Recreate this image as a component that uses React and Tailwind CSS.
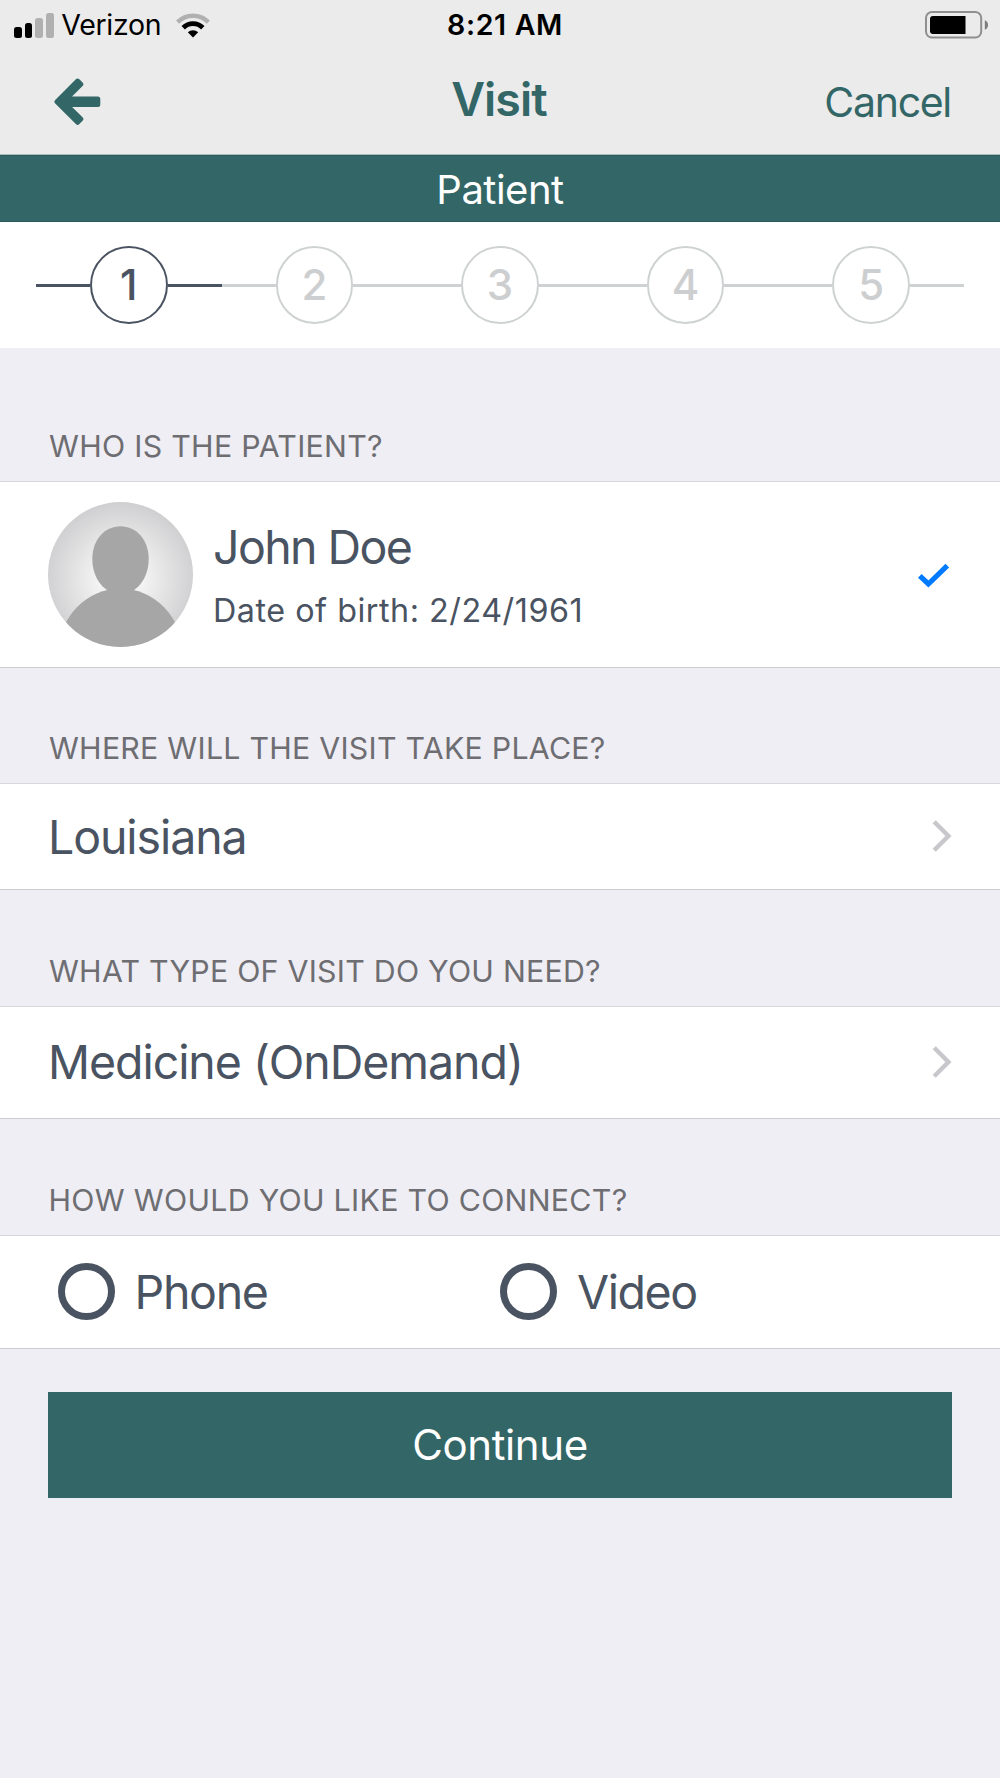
const steps = [1, 2, 3, 4, 5];

function SignalBars() {
  return (
    <div className="flex h-[25px] items-end gap-[3px]">
      <span className="h-[10.5px] w-[7.7px] rounded-[2.5px] bg-black" />
      <span className="h-[14.5px] w-[7.7px] rounded-[2.5px] bg-black" />
      <span className="h-[19.5px] w-[7.7px] rounded-[2.5px] bg-[#b0b0b0]" />
      <span className="h-[24.3px] w-[7.7px] rounded-[2.5px] bg-[#b0b0b0]" />
    </div>
  );
}

function WifiIcon({ className }) {
  return (
    <svg className={className} width="34" height="25" viewBox="0 0 34 25" fill="none">
      <path d="M1.6 9.1 A21.8 21.8 0 0 1 32.4 9.1" stroke="#b0b0b0" strokeWidth="4.4" />
      <path d="M7.2 14.7 A13.9 13.9 0 0 1 26.8 14.7" stroke="#000" strokeWidth="4.8" />
      <path d="M17 24.4 L11.8 19.2 A7.6 7.6 0 0 1 22.2 19.2 Z" fill="#000" />
    </svg>
  );
}

function BatteryIcon() {
  return (
    <svg width="64" height="28" viewBox="0 0 64 28" fill="none">
      <rect x="1" y="1" width="55.2" height="25.6" rx="6" stroke="#8f8f8f" strokeWidth="2" />
      <path d="M8 5 H40.5 V23 H8 A3 3 0 0 1 5 20 V8 A3 3 0 0 1 8 5 Z" fill="#000" />
      <path d="M59.8 9.2 Q63 10.5 63 14 Q63 17.5 59.8 18.8 Z" fill="#7d7d7d" />
    </svg>
  );
}

function BackArrow() {
  return (
    <svg width="48" height="48" viewBox="0 0 48 48">
      <path
        d="M4 23.7 L24.6 3.1 L27.8 6.3 L13 20.9 H44.8 V26.5 H13 L27.8 41.1 L24.6 44.3 Z"
        fill="#336666"
        stroke="#336666"
        strokeWidth="5"
        strokeLinejoin="round"
      />
    </svg>
  );
}

function Avatar() {
  return (
    <svg className="shrink-0" width="145" height="145" viewBox="0 0 145 145">
      <defs>
        <radialGradient id="halo" cx="72.5" cy="76" r="76" gradientUnits="userSpaceOnUse">
          <stop offset="0.3" stopColor="#f3f3f3" />
          <stop offset="1" stopColor="#cfcfd1" />
        </radialGradient>
        <clipPath id="disc">
          <circle cx="72.5" cy="72.5" r="72.5" />
        </clipPath>
      </defs>
      <g clipPath="url(#disc)">
        <rect width="145" height="145" fill="url(#halo)" />
        <path
          d="M72.5 24.3 C88.5 24.3 100.7 38 100.7 57 C100.7 71.5 94.5 83.5 83 90 H62 C50.5 83.5 44.3 71.5 44.3 57 C44.3 38 56.5 24.3 72.5 24.3 Z"
          fill="#a6a6a6"
        />
        <ellipse cx="72.5" cy="151" rx="62" ry="64.5" fill="#a6a6a6" />
      </g>
    </svg>
  );
}

function CheckIcon() {
  return (
    <svg className="translate-y-px" width="32" height="26" viewBox="0 0 32 26" fill="none">
      <path d="M1.8 12.8 L10.4 21 L29.3 2.6" stroke="#007aff" strokeWidth="5.2" />
    </svg>
  );
}

function Chevron() {
  return (
    <svg className="-translate-y-px" width="20" height="32" viewBox="0 0 20 32" fill="none">
      <path d="M2.2 1.8 L16.4 16 L2.2 30.2" stroke="#c7c7cc" strokeWidth="4.4" />
    </svg>
  );
}

function SectionLabel({ className, children }) {
  return (
    <h2 className={`flex items-end text-[30.3px] leading-[30px] whitespace-nowrap text-[#6d6d72] ${className}`}>
      {children}
    </h2>
  );
}

function Row({ className, children }) {
  return (
    <div className={`flex items-center border-y border-t-[#d8d8dc] border-b-[#cdcdd1] bg-white ${className}`}>
      {children}
    </div>
  );
}

function Radio({ label, className }) {
  return (
    <label className="flex flex-1 items-center">
      <span className="-mt-0.5 size-[57px] rounded-full border-[7px] border-[#4a5361]" />
      <span className={`text-[46.5px] leading-none ${className}`}>{label}</span>
    </label>
  );
}

function Stepper({ current }) {
  return (
    <div className="flex h-[126px] items-center bg-white px-9">
      {steps.map((n) => {
        const active = n === current;
        const line = active ? "bg-[#4a5361]" : "bg-[#cfd2d2]";
        const ring = active ? "border-[#4a5361] text-[#4a5361]" : "border-[#cfd2d2] text-[#cccecf]";
        return (
          <div key={n} className="flex flex-1 items-center">
            <span className={`mt-px h-[3px] flex-1 ${line}`} />
            <span
              className={`flex size-[77.5px] items-center justify-center rounded-full border-[2.4px] text-[42px] leading-none font-medium ${ring}`}
            >
              {n}
            </span>
            <span className={`mt-px h-[3px] flex-1 ${line}`} />
          </div>
        );
      })}
    </div>
  );
}

export default function App() {
  return (
    <div className="flex h-[1778px] w-[1000px] flex-col overflow-hidden bg-[#efeef4] font-['Inter','Liberation_Sans',sans-serif] text-[#4a5361]">
      <header className="h-[155px] border-b border-[#a9bcbc] bg-[#ebebeb]">
        <div className="grid h-[50px] grid-cols-3 items-center pr-[11px] pl-3.5 text-[28.5px] leading-none text-black">
          <div className="flex items-center">
            <SignalBars />
            <span className="mt-px ml-[7.5px] tracking-[-0.3px]">Verizon</span>
            <WifiIcon className="ml-[15px]" />
          </div>
          <div className="pt-px pl-[7px] text-center font-semibold tracking-[0.66px]">8:21 AM</div>
          <div className="flex justify-end">
            <BatteryIcon />
          </div>
        </div>
        <div className="grid h-[103px] grid-cols-3 items-center pr-[49px] pl-[53px] leading-none text-[#336666]">
          <button aria-label="Back" className="justify-self-start">
            <BackArrow />
          </button>
          <h1 className="pr-1.5 pb-[5px] text-center text-[46.5px] font-semibold tracking-[-0.9px]">Visit</h1>
          <button className="mt-px justify-self-end text-[41px] tracking-[-1.3px]">Cancel</button>
        </div>
      </header>

      <div className="flex h-[67px] items-center justify-center border-y border-t-[#2c5b5b] border-b-[#2c5b5b] bg-[#336666] pt-0.5 text-[40px] leading-none tracking-[-0.5px] text-white">
        Patient
      </div>

      <Stepper current={1} />

      <SectionLabel className="h-[133px] pb-5 pl-[49px] tracking-[0.3px]">WHO IS THE PATIENT?</SectionLabel>
      <Row className="h-[187px] pr-[50.5px] pl-12">
        <Avatar />
        <div className="ml-5 flex-1">
          <div className="text-[46.5px] leading-[64px] tracking-[-1.6px]">John Doe</div>
          <div className="mb-[-9px] text-[32.3px] leading-[64px] tracking-[0.52px]">Date of birth: 2/24/1961</div>
        </div>
        <CheckIcon />
      </Row>

      <SectionLabel className="h-[115px] pb-5 pl-[49px] tracking-[0.26px]">WHERE WILL THE VISIT TAKE PLACE?</SectionLabel>
      <Row className="h-[107px] justify-between pr-12 pl-12">
        <span className="mt-0.5 text-[46.5px] leading-none tracking-[-1.1px]">Louisiana</span>
        <Chevron />
      </Row>

      <SectionLabel className="h-[116px] pb-[20.5px] pl-[49px] tracking-[0.26px]">WHAT TYPE OF VISIT DO YOU NEED?</SectionLabel>
      <Row className="h-[113px] justify-between pr-12 pl-12">
        <span className="text-[46.5px] leading-none tracking-[-1.05px]">Medicine (OnDemand)</span>
        <Chevron />
      </Row>

      <SectionLabel className="h-[116px] pb-5 pl-[48.5px] tracking-[0.3px]">HOW WOULD YOU LIKE TO CONNECT?</SectionLabel>
      <Row className="h-[114px] pr-[58px] pl-[58px]">
        <Radio label="Phone" className="ml-[19.5px] tracking-[-1.3px]" />
        <Radio label="Video" className="ml-[20px] tracking-[-1.45px]" />
      </Row>

      <button className="mx-12 mt-[43px] h-[106px] bg-[#336666] text-[42px] leading-none tracking-[-0.39px] text-white">
        Continue
      </button>
    </div>
  );
}
